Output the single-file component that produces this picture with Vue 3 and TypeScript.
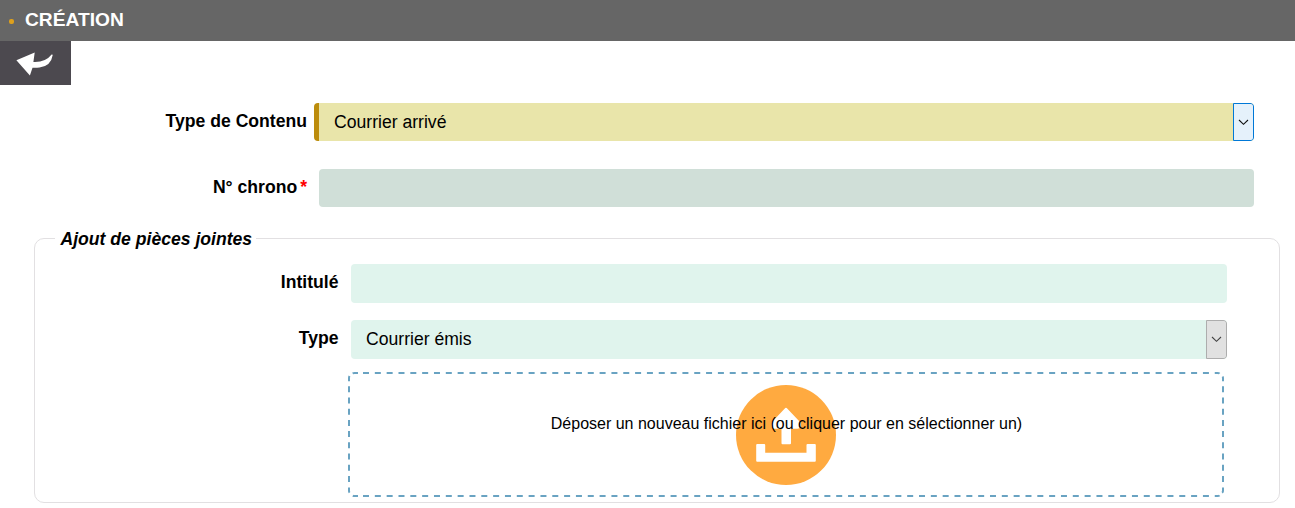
<script setup lang="ts">
import { ref } from 'vue'

const contentType = ref<string>('Courrier arrivé')
const attachmentType = ref<string>('Courrier émis')
</script>

<template>
  <main class="page">
    <header class="title-bar">
      <span class="bullet"></span>
      <h1>CRÉATION</h1>
    </header>
    <button class="back" type="button" aria-label="Retour">
      <svg width="71" height="44" viewBox="0 0 71 44">
        <path d="M16.4 19.2 L34.7 11.4 L33.4 21 Q45.5 21.6 51.6 13.6 L52.8 13.8 Q51 25.2 39.5 26.6 Q36 27 32.5 26.8 L29.9 34.4 Z" fill="#fff" />
      </svg>
    </button>
    <div class="row content-row">
      <label>Type de Contenu</label>
      <div class="select selected">
        <span>{{ contentType }}</span>
        <i class="arrow focused">
          <svg width="11" height="7" viewBox="0 0 11 7"><path d="M1 1 L5.5 5.3 L10 1" /></svg>
        </i>
      </div>
    </div>
    <div class="row chrono-row">
      <label>N° chrono<span class="required">*</span></label>
      <div class="input muted"></div>
    </div>
    <section class="group">
      <h2><span>Ajout de pièces jointes</span></h2>
      <div class="row title-row">
        <label>Intitulé</label>
        <div class="input"></div>
      </div>
      <div class="row type-row">
        <label>Type</label>
        <div class="select">
          <span>{{ attachmentType }}</span>
          <i class="arrow">
            <svg width="11" height="7" viewBox="0 0 11 7"><path d="M1 1 L5.5 5.3 L10 1" /></svg>
          </i>
        </div>
      </div>
      <div class="dropzone">
        <svg class="zone-art" width="876" height="125" viewBox="0 0 876 125">
          <g fill="none" stroke="#69a3c2" stroke-width="2">
            <path d="M15 1 H868" stroke-dasharray="6 5.83" />
            <path d="M15 124 H868" stroke-dasharray="6 5.83" />
            <path d="M1 14.2 V112" stroke-dasharray="6 5.23" />
            <path d="M875 14.2 V112" stroke-dasharray="6 5.23" />
            <path d="M4.6 1.4 Q5.4 1 6.5 1 H10 M1 9.3 V6 Q1 5 1.5 4" />
            <path d="M867 1 H869.5 Q871 1 871.5 1.7 M874.6 4.5 Q875 5.2 875 6 V9.3" />
            <path d="M1 115.5 V119 Q1 120 1.6 120.7 M4.8 123.6 Q5.5 124 6.5 124 H10" />
            <path d="M875 115.5 V119 Q875 120 874 120.6 M867 124 H869.5 Q871 124 871.5 123.3" />
          </g>
          <circle cx="438" cy="63" r="50" fill="#ffaa40" />
          <g fill="#fff" stroke="#fff" stroke-width="2" stroke-linejoin="round">
            <path d="M438 36.8 L451.5 51 Q452.5 55.7 449.5 55.7 H442 V71.3 H434.5 V55.7 H426.5 Q423.5 55.7 424.5 51 Z" />
            <path d="M409.2 73 H416.2 V81.8 H459.5 V73 H466.8 V88.8 H409.2 Z" />
          </g>
        </svg>
        <p>Déposer un nouveau fichier ici (ou cliquer pour en sélectionner un)</p>
      </div>
    </section>
  </main>
</template>

<style>
body {
  background: #fff;
  overflow: hidden;
}
</style>

<style scoped>
.page {
  width: 1295px;
  height: 508px;
  font-family: "Liberation Sans", Arial, sans-serif;
  color: #000;
  display: flex;
  flex-direction: column;
  overflow: hidden;
}
.title-bar {
  height: 41px;
  flex: none;
  box-sizing: border-box;
  padding: 0 0 1px 9px;
  background: #666;
  display: flex;
  align-items: center;
}
.bullet {
  width: 5px;
  height: 5px;
  margin: 2px 11px 0 0;
  border-radius: 2px;
  background: #dda01d;
}
h1 {
  margin: 0;
  color: #fff;
  font-size: 19.2px;
  line-height: 22px;
}
.back {
  width: 71px;
  height: 44px;
  flex: none;
  padding: 0;
  border: 0;
  background: #4c494f;
}
.back svg, .arrow svg {
  display: block;
}
.row {
  display: flex;
  flex: none;
}
.row label {
  box-sizing: border-box;
  text-align: right;
  font-size: 17.6px;
  font-weight: bold;
  line-height: 36px;
  white-space: nowrap;
}
.content-row {
  margin-top: 18px;
  height: 38px;
}
.content-row label {
  width: 314px;
  padding-right: 7px;
}
.chrono-row {
  margin-top: 28px;
  height: 38px;
}
.chrono-row label {
  width: 319px;
  padding-right: 12px;
}
.required {
  color: #f00;
  margin-left: 3px;
}
.input, .select {
  box-sizing: border-box;
  width: 876px;
  height: 39px;
  border-radius: 4px;
  background: #e0f4ed;
}
.input.muted {
  width: 935px;
  height: 38px;
  background: #d0dfd8;
}
.select {
  display: flex;
  overflow: hidden;
  padding-left: 15px;
  font-size: 17.6px;
  line-height: 38px;
}
.select.selected {
  width: 940px;
  height: 38px;
  border-left: 5px solid #bc8c0c;
  background: #e9e5aa;
}
.arrow {
  box-sizing: border-box;
  width: 21px;
  margin-left: auto;
  display: flex;
  align-items: center;
  justify-content: center;
  border: 1px solid #adadad;
  border-radius: 0 3px 3px 0;
  background: #e1e1e1;
}
.arrow path {
  fill: none;
  stroke: #444;
  stroke-width: 1.1;
}
.arrow.focused {
  border-color: #0078d7;
  background: #e5f1fb;
}
.arrow.focused path {
  stroke: #111;
}
.group {
  box-sizing: border-box;
  flex: none;
  width: 1246px;
  height: 265px;
  margin: 31px 0 0 34px;
  border: 1px solid #e2e0e2;
  border-radius: 10px;
}
h2 {
  margin: -11px 0 0 20px;
  height: 22px;
  font-size: 17.6px;
  line-height: 22px;
  font-style: italic;
}
h2 span {
  display: inline-block;
  padding: 0 4px 0 5.5px;
  background: #fff;
}
.title-row {
  margin-top: 14px;
  height: 39px;
}
.type-row {
  margin-top: 17px;
  height: 39px;
}
.group label {
  width: 316px;
  padding-right: 12.5px;
}
.dropzone {
  position: relative;
  width: 876px;
  height: 125px;
  margin: 13px 0 0 313px;
}
.zone-art {
  position: absolute;
  inset: 0;
}
.dropzone p {
  position: relative;
  margin: 0;
  padding: 42px 0 0 1px;
  text-align: center;
  font-size: 16px;
  line-height: 20px;
}
</style>
